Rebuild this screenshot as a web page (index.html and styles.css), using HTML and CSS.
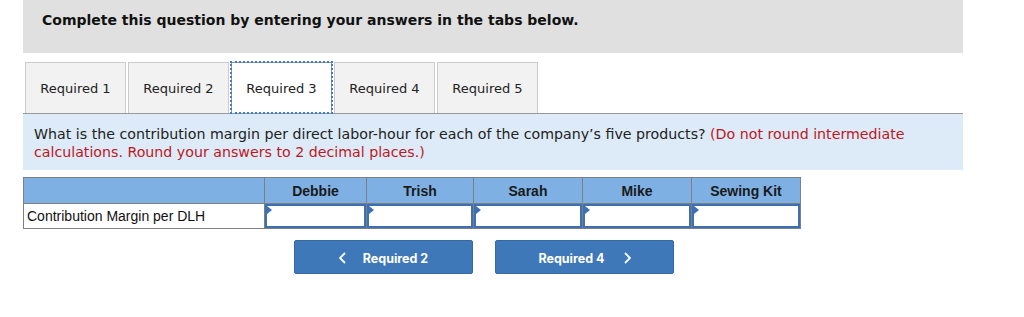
FILE: index.html
```html
<!DOCTYPE html>
<html lang="en">
<head>
    <meta charset="UTF-8">
    <title>Required 3</title>
    <link rel="stylesheet" href="styles.css">
</head>
<body>
    <div class="page">
        <div class="instructions">Complete this question by entering your answers in the tabs below.</div>

        <div class="tabs">
            <div class="tab">Required 1</div>
            <div class="tab">Required 2</div>
            <div class="tab active">Required 3</div>
            <div class="tab">Required 4</div>
            <div class="tab">Required 5</div>
        </div>

        <div class="question">
            What is the contribution margin per direct labor-hour for each of the company’s five products?
            <span class="note">(Do not round intermediate</span>
            <span class="note">calculations. Round your answers to 2 decimal places.)</span>
        </div>

        <table class="answers">
            <colgroup>
                <col class="col-label">
                <col class="col-debbie">
                <col class="col-trish">
                <col class="col-sarah">
                <col class="col-mike">
                <col class="col-kit">
            </colgroup>
            <tr class="head">
                <th></th>
                <th>Debbie</th>
                <th>Trish</th>
                <th>Sarah</th>
                <th>Mike</th>
                <th>Sewing Kit</th>
            </tr>
            <tr>
                <td class="label">Contribution Margin per DLH</td>
                <td class="entry"><div class="box"></div></td>
                <td class="entry"><div class="box"></div></td>
                <td class="entry"><div class="box"></div></td>
                <td class="entry"><div class="box"></div></td>
                <td class="entry"><div class="box"></div></td>
            </tr>
        </table>

        <div class="nav">
            <button class="nav-button prev">
                <svg class="chevron" width="7" height="12" viewBox="0 0 7 12"><path d="M6 1 1 6l5 5" fill="none" stroke="#fff" stroke-width="1.8"/></svg>
                <span>Required 2</span>
            </button>
            <button class="nav-button next">
                <span>Required 4</span>
                <svg class="chevron" width="7" height="12" viewBox="0 0 7 12"><path d="M1 1l5 5-5 5" fill="none" stroke="#fff" stroke-width="1.8"/></svg>
            </button>
        </div>
    </div>
</body>
</html>
```

FILE: styles.css
```css
* {
    margin: 0;
    padding: 0;
    box-sizing: border-box;
}

body {
    background-color: #fff;
    font-family: "DejaVu Sans", Verdana, sans-serif;
    color: #1a1a1a;
}

.page {
    margin-left: 23px;
    width: 940px;
}

.instructions {
    height: 53px;
    background-color: #e0e0e0;
    padding: 12px 0 0 19px;
    font-size: 14px;
    font-weight: bold;
    color: #111;
}

.tabs {
    display: flex;
    gap: 2px;
    margin-top: 9px;
    padding-left: 2px;
    border-bottom: 1px solid #999;
}

.tab {
    width: 101px;
    height: 51px;
    display: flex;
    align-items: center;
    justify-content: center;
    background-color: #f2f2f2;
    border: 1px solid #ccc;
    border-bottom: none;
    font-size: 13px;
    color: #222;
}

.tab.active {
    background-color: #fff;
    border-color: #999;
    outline: 2px dotted #3a7bd5;
    outline-offset: -1px;
}

.question {
    background-color: #dcebf7;
    height: 56px;
    padding: 11px 11px 0;
    font-size: 14.2px;
    line-height: 18px;
    color: #222;
}

.note {
    color: #c0161e;
}

.answers {
    margin-top: 7px;
    width: 777px;
    table-layout: fixed;
    border-collapse: collapse;
    font-family: "Liberation Sans", Arial, sans-serif;
    font-size: 14px;
}

.col-label { width: 241px; }
.col-debbie { width: 102px; }
.col-trish { width: 107px; }
.col-sarah { width: 109px; }
.col-mike { width: 109px; }
.col-kit { width: 109px; }

.answers th,
.answers td {
    border: 1px solid #7f7f7f;
}

.head th {
    background-color: #7eb0e3;
    height: 26px;
    font-weight: bold;
    color: #1a1a1a;
}

.answers td {
    height: 25px;
}

.answers td.label {
    padding-left: 3px;
    color: #111;
    white-space: nowrap;
}

.answers td.entry {
    padding: 0;
}

.box {
    position: relative;
    height: 24px;
    border: 2px solid #3c70b2;
}

.box::before {
    content: "";
    position: absolute;
    left: 0;
    top: 0;
    border-top: 4px solid transparent;
    border-bottom: 4px solid transparent;
    border-left: 5px solid #3c70b2;
}

.nav {
    display: flex;
    gap: 22px;
    margin: 11px 0 0 271px;
}

.nav-button {
    width: 179px;
    height: 34px;
    padding-top: 2px;
    display: flex;
    align-items: center;
    justify-content: center;
    background-color: #3e78b9;
    border: 1px solid #356aa5;
    border-radius: 2px;
    color: #fff;
    font-family: Inter, "Liberation Sans", sans-serif;
    font-size: 12.5px;
    font-weight: bold;
}

.prev {
    gap: 17px;
}

.next {
    gap: 19px;
}
```
